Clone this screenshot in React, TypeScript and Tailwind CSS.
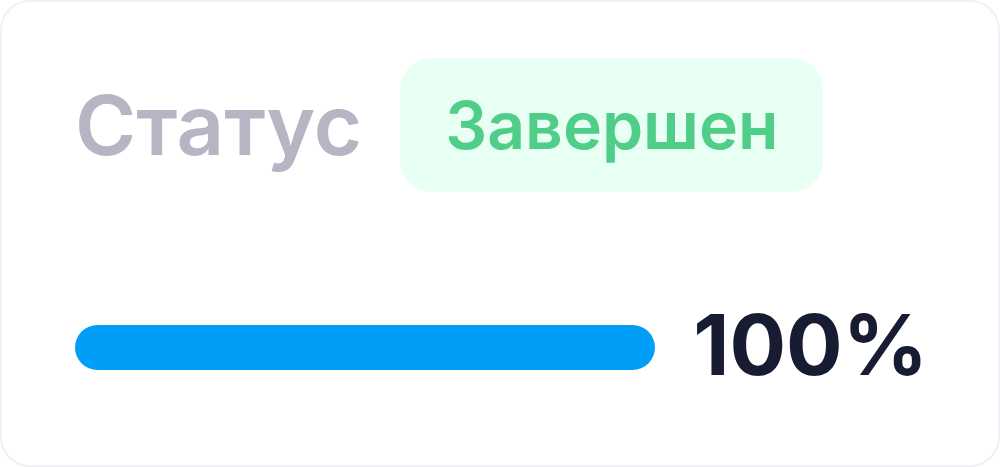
export default function App() {
  return (
    <div className="w-[1000px] h-[467px] bg-white overflow-hidden font-['Inter',sans-serif]">
      <div className="w-full h-full rounded-[30px] border-2 border-[#f0f0f5] pl-[73px] pr-[70px] pt-[56px]">
        <div className="flex items-center gap-[38px]">
          <span className="text-[83px] font-semibold leading-none text-[#B5B5C3]">Статус</span>
          <span className="h-[134px] px-[45px] flex items-center rounded-[32px] bg-[#E8FFF3] text-[66px] font-semibold leading-none text-[#50CD89]">
            Завершен
          </span>
        </div>
        <div className="mt-[111px] flex items-center gap-[38px]">
          <div className="w-[584px] h-[45px] mt-[5px] rounded-full bg-[#009EF7]" />
          <span className="text-[84px] font-bold leading-none text-[#181C32]">100%</span>
        </div>
      </div>
    </div>
  );
}
